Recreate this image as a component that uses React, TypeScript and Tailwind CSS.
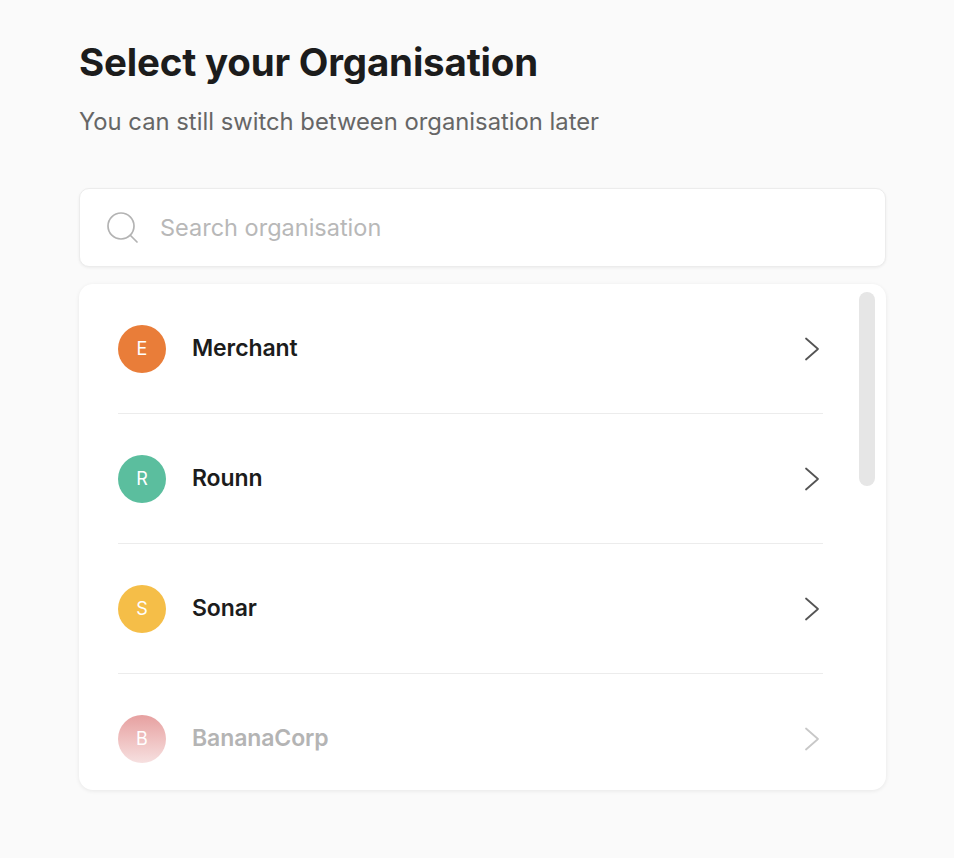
import React from 'react';

const orgs = [
  { name: "Merchant", letter: "E", color: "bg-[#e97d39]", faded: false },
  { name: "Rounn", letter: "R", color: "bg-[#5bbe9e]", faded: false },
  { name: "Sonar", letter: "S", color: "bg-[#f5be48]", faded: false },
  { name: "BananaCorp", letter: "B", color: "bg-gradient-to-b from-[#e6a0a0] to-[#f6e0e0]", faded: true },
];

const Chevron = ({ color }: { color: string }) => (
  <svg width="16" height="24" viewBox="0 0 16 24" fill="none" stroke={color} strokeWidth="1.8" strokeLinecap="round" strokeLinejoin="round">
    <polyline points="2,1.5 14,12 2,22.5" />
  </svg>
);

const SelectOrganisation = () => {
  return (
    <div className="min-h-screen bg-[#fafafa] pl-[79px] pr-[68px] pt-[37px] pb-10 font-['Inter','Liberation_Sans',sans-serif]">
      <h1 className="text-[38.5px] leading-[50px] font-bold tracking-[-0.2px] text-[#1c1c1c]">Select your Organisation</h1>
      <p className="mt-[19px] text-[23.8px] leading-[32px] text-[#666]">You can still switch between organisation later</p>

      {/* Search */}
      <div className="mt-[50px] h-[79px] bg-white rounded-[10px] border border-[#ececec] shadow-[0_1px_3px_rgba(0,0,0,0.06)] flex items-center px-[26px]">
        <svg width="34" height="34" viewBox="0 0 34 34" fill="none" stroke="#b3b3b3" strokeWidth="1.7" strokeLinecap="round">
          <circle cx="15" cy="15" r="13" />
          <line x1="24.5" y1="24.5" x2="31" y2="31" />
        </svg>
        <span className="ml-[20px] text-[23.5px] text-[#b8b8b8]">Search organisation</span>
      </div>

      {/* List */}
      <div className="relative mt-[17px] h-[506px] overflow-hidden bg-white rounded-[14px] shadow-[0_1px_4px_rgba(0,0,0,0.08)]">
        <div className="pl-[39px] pr-[63px]">
          {orgs.map((org, index) => (
            <div key={index} className="h-[130px] flex items-center border-b border-[#ececec]">
              <div className={`w-[48px] h-[48px] rounded-full ${org.color} flex items-center justify-center text-white text-[18px]`}>
                {org.letter}
              </div>
              <span className={`ml-[26px] text-[23px] font-semibold tracking-[-0.1px] ${org.faded ? "text-[#b4b4b4]" : "text-[#1c1c1c]"}`}>
                {org.name}
              </span>
              <div className="ml-auto mr-[3px]">
                <Chevron color={org.faded ? "#c8c8c8" : "#555"} />
              </div>
            </div>
          ))}
        </div>
        {/* scroll thumb */}
        <div className="absolute right-[11px] top-[8px] w-[16px] h-[194px] rounded-full bg-[#e6e6e6]" />
      </div>
    </div>
  );
};

export default SelectOrganisation;
